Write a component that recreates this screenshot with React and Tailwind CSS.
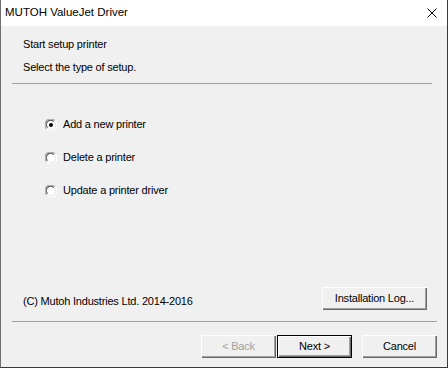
import React from "react";

const Radio = ({ checked }) => (
  <svg width="12" height="12" viewBox="0 0 12 12" className="shrink-0">
    <circle cx="6" cy="6" r="5.5" fill="#ffffff" />
    <path d="M1.6 9.6 A5.5 5.5 0 0 1 9.6 1.6" stroke="#a0a0a0" strokeWidth="1.2" fill="none" />
    <path d="M2.6 8.6 A4.2 4.2 0 0 1 8.6 2.6" stroke="#505050" strokeWidth="1.1" fill="none" />
    <path d="M10.4 2.4 A5.5 5.5 0 0 1 2.4 10.4" stroke="#ffffff" strokeWidth="1" fill="none" />
    <path d="M9.4 3.4 A4.2 4.2 0 0 1 3.4 9.4" stroke="#e3e3e3" strokeWidth="1" fill="none" />
    {checked && <circle cx="6" cy="6" r="2" fill="#000000" />}
  </svg>
);

const Button = ({ children, primary, disabled, className = "" }) => (
  <div
    className={
      "h-[23px] w-[75px] flex items-center justify-center bg-[#f0f0f0] " +
      (primary
        ? "border border-black shadow-[inset_1px_1px_#ffffff,inset_-1px_-1px_#696969,inset_-2px_-2px_#a0a0a0] "
        : "shadow-[inset_1px_1px_#ffffff,inset_-1px_-1px_#696969,inset_-2px_-2px_#a0a0a0] ") +
      (disabled ? "text-[#a0a0a0] " : "text-black ") +
      className
    }
  >
    {children}
  </div>
);

export default function App() {
  const options = [
    { label: "Add a new printer", checked: true },
    { label: "Delete a printer", checked: false },
    { label: "Update a printer driver", checked: false },
  ];

  return (
    <div
      className="w-[448px] h-[368px] flex flex-col border-l border-l-[#6e6e6e] border-r border-r-[#1d4455] border-b border-b-[#1d4455] text-[11px] tracking-[-0.2px] text-black"
      style={{ fontFamily: '"Liberation Sans", Arial, sans-serif' }}
    >
      <div className="h-[26px] bg-white flex items-center justify-between pl-[4px] pr-[10px] shrink-0">
        <span className="text-[11.5px] tracking-normal">MUTOH ValueJet Driver</span>
        <svg width="10" height="10" viewBox="0 0 10 10">
          <path d="M0.5 0.5 L9.5 9.5 M9.5 0.5 L0.5 9.5" stroke="#000" strokeWidth="1" />
        </svg>
      </div>

      <div className="flex-1 bg-[#f0f0f0] flex flex-col">
        <div className="pl-[22px] pt-[12px] flex flex-col gap-[10px] leading-[13px]">
          <span>Start setup printer</span>
          <span>Select the type of setup.</span>
        </div>
        <div className="mt-[9px] ml-[11px] mr-[15px] h-px bg-[#a0a0a0]"></div>

        <div className="mt-[34px] pl-[44px] flex flex-col gap-[20px] leading-[13px]">
          {options.map((opt) => (
            <div key={opt.label} className="flex items-center gap-[6px]">
              <Radio checked={opt.checked} />
              <span>{opt.label}</span>
            </div>
          ))}
        </div>

        <div className="flex-1"></div>

        <div className="flex items-center justify-between pl-[22px] pr-[20px]">
          <span className="mt-[5px]">(C) Mutoh Industries Ltd. 2014-2016</span>
          <Button className="w-[105px]">Installation Log...</Button>
        </div>

        <div className="mt-[11px] ml-[11px] mr-[10px] h-px bg-[#a0a0a0]"></div>

        <div className="mt-[13px] mb-[9px] flex justify-end pr-[10px]">
          <Button disabled>&lt; Back</Button>
          <Button primary className="ml-[1px]">Next &gt;</Button>
          <Button className="ml-[10px]">Cancel</Button>
        </div>
      </div>
    </div>
  );
}
